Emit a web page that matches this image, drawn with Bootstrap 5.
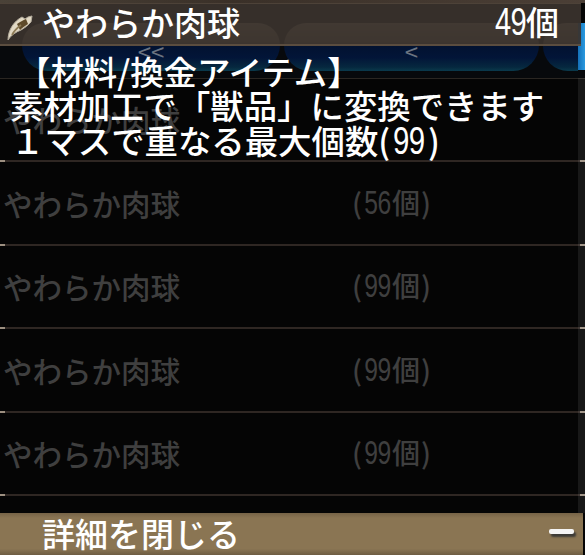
<!DOCTYPE html>
<html lang="ja">
<head>
<meta charset="utf-8">
<title>やわらか肉球</title>
<link href="https://cdn.jsdelivr.net/npm/bootstrap@5.3.0/dist/css/bootstrap.min.css" rel="stylesheet">
<style>
html,body{margin:0;height:555px;overflow:hidden;background:#050505}
body{font-family:"Noto Sans CJK JP","Noto Sans",sans-serif;position:relative;width:585px}
.topstrip{height:3px;background:linear-gradient(90deg,#4a4238,#3a3028 40%,#4b3f36)}
.headbar{height:43px;background:rgba(58,51,45,.93);border-top:1px solid #4d4238;border-bottom:2px solid #5b4d3f;margin-right:4px;color:#fff;font-size:33px;font-weight:500;line-height:1;padding-left:7px;position:relative;z-index:2}
.headbar svg{flex:none;margin-right:8px;margin-top:7px}
.namecap{margin-top:-4px}
.cnt{margin-right:22px;margin-top:-4px}
.num{display:inline-block;font-family:"Liberation Sans",sans-serif;font-size:1.16em;line-height:1;transform:scaleX(.76);margin:0 -.135em;letter-spacing:-.02em}
.tabstrip{height:56px;margin-top:-23px;background:#07090c;color:#6a7380;font-size:24px;line-height:1;gap:4px;padding-left:22px;position:relative;border-bottom:1px solid #2a2622}
.tabstrip::after{content:"";position:absolute;right:0;top:0;bottom:8px;width:7px;background:linear-gradient(90deg,#1470b8,#2a9ae0)}
.pillbox{height:48px;border-radius:24px 24px 28px 28px;background:linear-gradient(180deg,#9a8a70 0,#6a5e4e 40%,#021230 48%,#021538 72%,#06283f 92%,#0a3a4c 100%);flex:none;padding-top:16px}
.pilla{width:258px}
.pillb{width:255px}
.pillc{width:35px;border-radius:24px 0 0 26px}
.rowsbox{height:434px}
.itemrow{height:83.4px;border-bottom:2px solid #2f2723;color:#3f3f3f;font-size:29.5px;font-weight:500;line-height:1;position:relative;padding-top:1px}
.itemrow::before,.itemrow::after{content:"";position:absolute;bottom:-2px;width:5px;height:2px;background:#9c8f80}
.itemrow::before{left:0}
.itemrow::after{right:0}
.itemname{margin-left:3px}
.itemcnt{position:absolute;left:352px;top:50%;transform:translateY(-50%);font-size:28px;letter-spacing:1px}
.itemcnt .num{margin:0 -.09em}
.closebar{height:42px;background:linear-gradient(180deg,#766347 0,#8a7553 12%,#8a7553 85%,#6d5c42 100%);color:#fff;font-size:33px;font-weight:500;line-height:1;padding-left:42px;margin-right:2px;position:absolute;top:513px;left:0;right:0}
.closebar span{margin-top:-2px}
.minusmark{position:absolute;right:9px;top:16px;width:25px;height:5px;border-radius:2px;background:#f4f4f4;box-shadow:2px 3px 2px #3c3a36}
.infotext{position:absolute;left:0;right:0;top:54px;color:#fff;font-size:33.4px;font-weight:500;line-height:34px;z-index:3}
.infotext .l1{padding-left:17px}
.infotext .l2{padding-left:10px}
.infotext .l3{padding-left:11px}
.infotext .l3 .num{margin:0 -.05em}
.sideedge{position:absolute;right:0;top:78px;width:7px;height:435px;background:rgba(255,255,255,.08);z-index:1}
</style>
</head>
<body>
<div class="topstrip"></div>
<div class="headbar d-flex align-items-center justify-content-between">
  <div class="d-flex align-items-center">
    <svg width="27" height="26" viewBox="0 0 27 26">
      <path d="M1 25C1 15 7 6 15 2l3 2 3-2 4-1-1 6-3 3c-2 2-4 3-7 5-5 2-10 5-13 10z" fill="#e2d9c4" stroke="#b3ab9c" stroke-width="1"/>
      <path d="M10 9c3-2 6-4 9-5l2 5c-3 2-6 4-8 6z" fill="#5e4a2a"/>
      <path d="M5 20c2-4 5-7 9-10" fill="none" stroke="#8d7a55" stroke-width="1.8"/>
    </svg>
    <div class="namecap">やわらか肉球</div>
  </div>
  <div class="cnt"><span class="num">49</span>個</div>
</div>
<div class="tabstrip d-flex">
  <div class="pillbox pilla text-center">&lt;&lt;</div>
  <div class="pillbox pillb text-center">&lt;</div>
  <div class="pillbox pillc"></div>
</div>
<div class="rowsbox">
  <div class="itemrow d-flex align-items-center"><div class="itemname">やわらか肉球</div></div>
  <div class="itemrow d-flex align-items-center"><div class="itemname">やわらか肉球</div><div class="itemcnt">(<span class="num">56</span>個)</div></div>
  <div class="itemrow d-flex align-items-center"><div class="itemname">やわらか肉球</div><div class="itemcnt">(<span class="num">99</span>個)</div></div>
  <div class="itemrow d-flex align-items-center"><div class="itemname">やわらか肉球</div><div class="itemcnt">(<span class="num">99</span>個)</div></div>
  <div class="itemrow d-flex align-items-center"><div class="itemname">やわらか肉球</div><div class="itemcnt">(<span class="num">99</span>個)</div></div>
</div>
<div class="sideedge"></div>
<div class="infotext">
  <div class="l1">【材料/換金アイテム】</div>
  <div class="l2">素材加工で「獣品」に変換できます</div>
  <div class="l3">１マスで重なる最大個数(<span class="num">99</span>)</div>
</div>
<div class="closebar d-flex align-items-center"><span>詳細を閉じる</span><i class="minusmark"></i></div>
</body>
</html>
